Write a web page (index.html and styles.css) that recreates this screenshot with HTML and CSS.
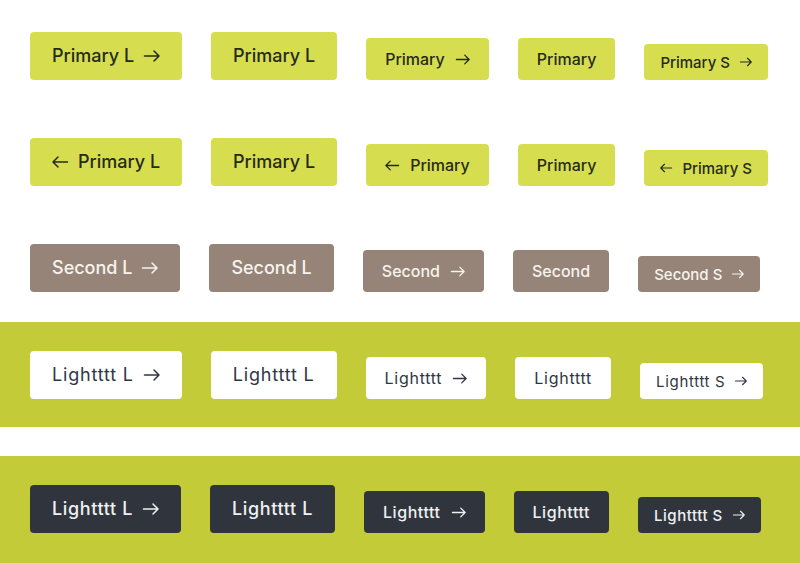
FILE: index.html
```html
<!DOCTYPE html>
<html lang="en">
<head>
<meta charset="utf-8">
<title>Buttons</title>
<link rel="stylesheet" href="styles.css">
</head>
<body>
<main class="page">
  <section class="plain">
    <div class="row">
      <button class="btn btn-primary btn-l">Primary L<svg class="arrow" viewBox="0 0 16 12"><path d="M0.5 6H15M10 1l5 5-5 5"/></svg></button>
      <button class="btn btn-primary btn-l">Primary L</button>
      <button class="btn btn-primary btn-m">Primary<svg class="arrow" viewBox="0 0 16 12"><path d="M0.5 6H15M10 1l5 5-5 5"/></svg></button>
      <button class="btn btn-primary btn-m">Primary</button>
      <button class="btn btn-primary btn-s">Primary S<svg class="arrow" viewBox="0 0 16 12"><path d="M0.5 6H15M10 1l5 5-5 5"/></svg></button>
    </div>
    <div class="row">
      <button class="btn btn-primary btn-l"><svg class="arrow" viewBox="0 0 16 12"><path d="M15.5 6H1M6 1L1 6l5 5"/></svg>Primary L</button>
      <button class="btn btn-primary btn-l">Primary L</button>
      <button class="btn btn-primary btn-m"><svg class="arrow" viewBox="0 0 16 12"><path d="M15.5 6H1M6 1L1 6l5 5"/></svg>Primary</button>
      <button class="btn btn-primary btn-m">Primary</button>
      <button class="btn btn-primary btn-s"><svg class="arrow" viewBox="0 0 16 12"><path d="M15.5 6H1M6 1L1 6l5 5"/></svg>Primary S</button>
    </div>
    <div class="row">
      <button class="btn btn-second btn-l">Second L<svg class="arrow" viewBox="0 0 16 12"><path d="M0.5 6H15M10 1l5 5-5 5"/></svg></button>
      <button class="btn btn-second btn-l">Second L</button>
      <button class="btn btn-second btn-m">Second<svg class="arrow" viewBox="0 0 16 12"><path d="M0.5 6H15M10 1l5 5-5 5"/></svg></button>
      <button class="btn btn-second btn-m">Second</button>
      <button class="btn btn-second btn-s">Second S<svg class="arrow" viewBox="0 0 16 12"><path d="M0.5 6H15M10 1l5 5-5 5"/></svg></button>
    </div>
  </section>
  <section class="band">
    <div class="row">
      <button class="btn btn-light btn-l">Lightttt L<svg class="arrow" viewBox="0 0 16 12"><path d="M0.5 6H15M10 1l5 5-5 5"/></svg></button>
      <button class="btn btn-light btn-l">Lightttt L</button>
      <button class="btn btn-light btn-m">Lightttt<svg class="arrow" viewBox="0 0 16 12"><path d="M0.5 6H15M10 1l5 5-5 5"/></svg></button>
      <button class="btn btn-light btn-m">Lightttt</button>
      <button class="btn btn-light btn-s">Lightttt S<svg class="arrow" viewBox="0 0 16 12"><path d="M0.5 6H15M10 1l5 5-5 5"/></svg></button>
    </div>
  </section>
  <section class="band band-second">
    <div class="row">
      <button class="btn btn-dark btn-l">Lightttt L<svg class="arrow" viewBox="0 0 16 12"><path d="M0.5 6H15M10 1l5 5-5 5"/></svg></button>
      <button class="btn btn-dark btn-l">Lightttt L</button>
      <button class="btn btn-dark btn-m">Lightttt<svg class="arrow" viewBox="0 0 16 12"><path d="M0.5 6H15M10 1l5 5-5 5"/></svg></button>
      <button class="btn btn-dark btn-m">Lightttt</button>
      <button class="btn btn-dark btn-s">Lightttt S<svg class="arrow" viewBox="0 0 16 12"><path d="M0.5 6H15M10 1l5 5-5 5"/></svg></button>
    </div>
  </section>
</main>
</body>
</html>
```

FILE: styles.css
```css
* { box-sizing: border-box; }

html, body {
  margin: 0;
  padding: 0;
  background: #ffffff;
  font-family: Inter, "Liberation Sans", sans-serif;
}

.page {
  display: flex;
  flex-direction: column;
  height: 563px;
  overflow: hidden;
}

.plain {
  display: flex;
  flex-direction: column;
  gap: 58px;
  padding: 32px 30px 30px;
}

.row {
  display: flex;
  align-items: flex-end;
  gap: 29px;
  height: 48px;
}

.band {
  background: #c3cb38;
  padding: 29px 30px 28px;
}

.band-second {
  margin-top: 29px;
  flex: 1;
}

.btn {
  display: inline-flex;
  align-items: center;
  justify-content: center;
  border: none;
  border-radius: 4px;
  font-family: inherit;
  font-weight: 500;
  white-space: nowrap;
  cursor: pointer;
  margin: 0;
  line-height: 1;
}

.btn-l {
  height: 48px;
  padding: 0 22px;
  font-size: 18px;
  gap: 10px;
}
.btn-l .arrow { width: 16px; height: 12px; }

.btn-m {
  height: 42px;
  padding: 0 19px;
  font-size: 16px;
  gap: 11px;
}
.btn-m .arrow { width: 14px; height: 11px; }

.btn-s {
  height: 36px;
  padding: 0 16px;
  font-size: 15px;
  gap: 10px;
}
.btn-s .arrow { width: 12px; height: 10px; }

.arrow {
  flex: none;
  fill: none;
  stroke: currentColor;
  stroke-width: 1.5;
  stroke-linecap: round;
  stroke-linejoin: round;
  overflow: visible;
}

.btn-primary {
  background: #d6de4f;
  color: #262a1c;
}

.btn-second {
  background: #958477;
  color: #f7f3ee;
}

.btn-light {
  background: #ffffff;
  color: #2f3746;
  font-weight: 400;
  letter-spacing: 0.045em;
}

.btn-dark {
  background: #30353d;
  color: #eef0f2;
  letter-spacing: 0.035em;
}
```
